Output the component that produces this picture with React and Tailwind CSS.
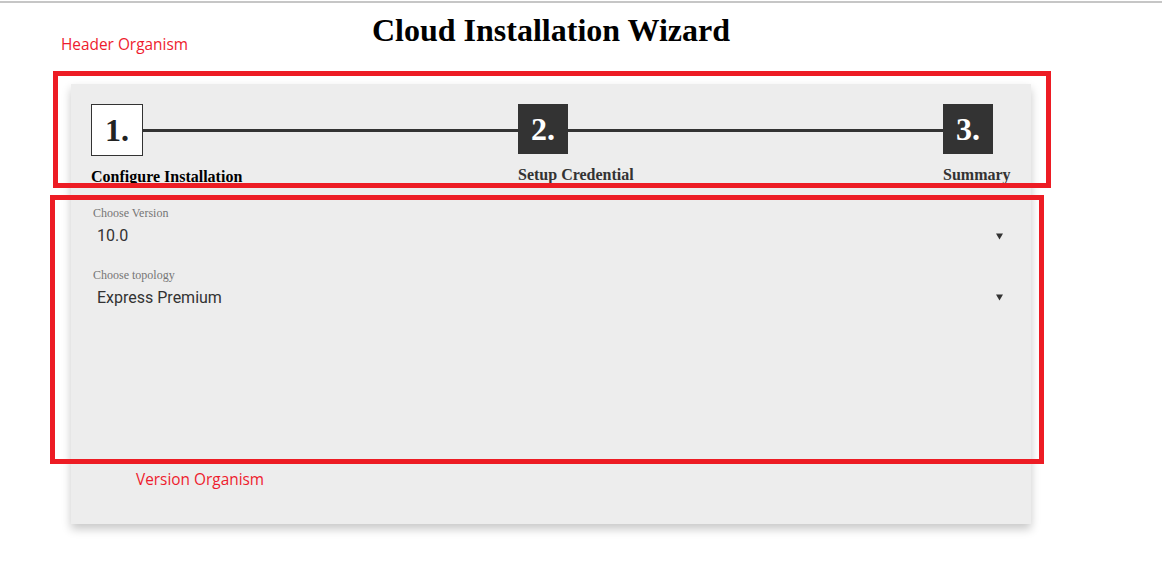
import React from "react";

const serif = { fontFamily: '"Liberation Serif", "Times New Roman", serif' };

const steps = [
  { n: "1.", label: "Configure Installation", active: true },
  { n: "2.", label: "Setup Credential" },
  { n: "3.", label: "Summary" },
];

const Arrow = () => (
  <svg width="7" height="7" viewBox="0 0 7 7" className="shrink-0">
    <path d="M0 0.5 H7 L3.5 6.5 Z" fill="#333" />
  </svg>
);

const SelectField = ({ label, value }) => (
  <div className="flex flex-col">
    <span className="text-[12px] leading-[13.8px] text-[#757575] font-['Liberation_Serif',serif]">
      {label}
    </span>
    <div className="mt-[6px] flex items-center justify-between pl-[4px] pr-[8px]">
      <span className="text-[16px] leading-[18.75px] text-[#333] font-['Roboto',sans-serif]">
        {value}
      </span>
      <Arrow />
    </div>
  </div>
);

export default function App() {
  return (
    <div className="relative w-full h-[580px] bg-white overflow-hidden">
      {/* top edge */}
      <div className="mt-[1px] h-[2px] bg-[#c6c6c6]" />

      <div className="ml-[71px] w-[960px]">
        <h1
          className="mt-[9px] text-center text-[32px] leading-[36.8px] font-bold text-black"
          style={serif}
        >
          Cloud Installation Wizard
        </h1>

        {/* Wizard card */}
        <div className="mt-[35px] h-[440px] bg-[#ededed] shadow-[0_5px_9px_rgba(0,0,0,0.22)] pt-[20px] pl-[20px] pr-[20px]">
          {/* Steps */}
          <div className="flex items-start pr-[18px]" style={serif}>
            {steps.map((s, i) => (
              <React.Fragment key={s.n}>
                {i > 0 && <div className="flex-1 h-[3px] mt-[25px] bg-[#333]" />}
                <div className="flex flex-col">
                  <div
                    className={
                      s.active
                        ? "w-[52px] h-[52px] border border-[#333] bg-white text-[#222] flex items-center justify-center text-[32px] font-bold"
                        : "w-[50px] h-[50px] bg-[#333] text-white flex items-center justify-center text-[32px] font-bold"
                    }
                  >
                    {s.n}
                  </div>
                  <div className="relative h-[18.4px] mt-[12.5px]">
                    <span
                      className={
                        "absolute left-0 top-0 whitespace-nowrap text-[16px] leading-[18.4px] font-bold " +
                        (s.active ? "text-black" : "text-[#333]")
                      }
                    >
                      {s.label}
                    </span>
                  </div>
                </div>
              </React.Fragment>
            ))}
          </div>

          {/* Version section */}
          <div className="mt-[20.5px] flex flex-col gap-[23px] pl-[2px]">
            <SelectField label="Choose Version" value="10.0" />
            <SelectField label="Choose topology" value="Express Premium" />
          </div>
        </div>
      </div>

      {/* Annotations */}
      <span className="absolute left-[61px] top-[33px] text-[15.4px] text-[#ee1c2e] font-['Open_Sans',sans-serif]">
        Header Organism
      </span>
      <div className="absolute left-[53px] top-[71px] w-[998px] h-[117px] border-[5px] border-[#ed1c24]" />
      <div className="absolute left-[50px] top-[195px] w-[994px] h-[269px] border-[5px] border-[#ed1c24]" />
      <span className="absolute left-[136px] top-[468px] text-[15.4px] text-[#ee1c2e] font-['Open_Sans',sans-serif]">
        Version Organism
      </span>
    </div>
  );
}
